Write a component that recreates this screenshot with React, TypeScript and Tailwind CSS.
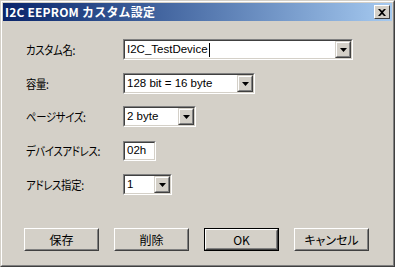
import React from "react";

const jp = "font-['Noto_Sans_CJK_JP',sans-serif] [font-feature-settings:'palt']";

function Arrow() {
  return (
    <div className="w-[16px] h-[17px] bg-[#d4d0c8] border border-t-[#d4d0c8] border-l-[#d4d0c8] border-r-[#404040] border-b-[#404040]">
      <div className="w-full h-full border border-t-white border-l-white border-r-[#808080] border-b-[#808080] flex items-center justify-center">
        <svg width="7" height="4" viewBox="0 0 7 4">
          <polygon points="0,0 7,0 3.5,4" fill="#000" />
        </svg>
      </div>
    </div>
  );
}

function Sunken({ w, h, children }: { w: string; h: string; children: React.ReactNode }) {
  return (
    <div className={`${w} ${h} border border-t-[#808080] border-l-[#808080] border-r-white border-b-white`}>
      <div className="w-full h-full border border-t-[#404040] border-l-[#404040] border-r-[#d4d0c8] border-b-[#d4d0c8] bg-white flex items-center">
        {children}
      </div>
    </div>
  );
}

function Combo({ w, text, caret }: { w: string; text: string; caret?: boolean }) {
  return (
    <Sunken w={w} h="h-[21px]">
      <div className="flex-1 pl-[2px] flex items-center text-[11.5px] font-['Liberation_Sans',sans-serif] text-black leading-none">
        {text}
        {caret && <span className="inline-block w-[1px] h-[14px] bg-black ml-[1px]" />}
      </div>
      <Arrow />
    </Sunken>
  );
}

function Btn({ label, def }: { label: string; def?: boolean }) {
  return (
    <div className={`w-[75px] h-[23px] ${def ? "border border-black" : ""}`}>
      <div className="w-full h-full border border-t-white border-l-white border-r-[#404040] border-b-[#404040]">
        <div className={`w-full h-full border border-t-[#d4d0c8] border-l-[#d4d0c8] border-r-[#808080] border-b-[#808080] flex items-center justify-center text-[12px] text-black ${jp}`}>
          {label}
        </div>
      </div>
    </div>
  );
}

function Row({ label, mt, children }: { label: string; mt: string; children: React.ReactNode }) {
  return (
    <div className={`flex items-center ${mt}`}>
      <div className="w-[97px] flex items-center">
        <div className={`whitespace-nowrap origin-left scale-x-[0.86] text-[12px] leading-[16px] tracking-[-0.3px] text-black ${jp}`}>{label}</div>
      </div>
      {children}
    </div>
  );
}

export default function App() {
  return (
    <div className="w-[395px] h-[267px] bg-[#d4d0c8]">
      <div className="w-full h-full border border-t-[#d4d0c8] border-l-[#d4d0c8] border-r-[#404040] border-b-[#404040]">
        <div className="w-full h-full border border-t-white border-l-white border-r-[#808080] border-b-[#808080] p-[1px] flex flex-col">
          <div className="h-[18px] bg-gradient-to-r from-[#0a246a] to-[#a6caf0] flex items-center justify-between pl-[2px] pr-[2px]">
            <span className="text-white font-bold text-[12px] tracking-[0.2px] leading-none font-['Noto_Sans_CJK_JP',sans-serif]">I2C EEPROM カスタム設定</span>
            <div className="w-[16px] h-[14px] bg-[#d4d0c8] border border-t-white border-l-white border-r-[#404040] border-b-[#404040] flex items-center justify-center">
              <svg width="8" height="7" viewBox="0 0 8 7">
                <path d="M0 0 L2 0 L4 2 L6 0 L8 0 L5 3.5 L8 7 L6 7 L4 5 L2 7 L0 7 L3 3.5 Z" fill="#000" />
              </svg>
            </div>
          </div>
          <div className="flex-1 flex flex-col pl-[23px]">
            <Row label="カスタム名:" mt="mt-[18px]">
              <Combo w="w-[230px]" text="I2C_TestDevice" caret />
            </Row>
            <Row label="容量:" mt="mt-[13px]">
              <Combo w="w-[132px]" text="128 bit = 16 byte" />
            </Row>
            <Row label="ページサイズ:" mt="mt-[12px]">
              <Combo w="w-[73px]" text="2 byte" />
            </Row>
            <Row label="デバイスアドレス:" mt="mt-[14px]">
              <Sunken w="w-[33px]" h="h-[20px]">
                <span className="pl-[2px] text-[11.5px] font-['Liberation_Sans',sans-serif] text-black">02h</span>
              </Sunken>
            </Row>
            <Row label="アドレス指定:" mt="mt-[13px]">
              <Combo w="w-[49px]" text="1" />
            </Row>
            <div className="flex gap-[15px] mt-[33px] ml-[-2px]">
              <Btn label="保存" />
              <Btn label="削除" />
              <Btn label="OK" def />
              <Btn label="キャンセル" />
            </div>
          </div>
        </div>
      </div>
    </div>
  );
}
